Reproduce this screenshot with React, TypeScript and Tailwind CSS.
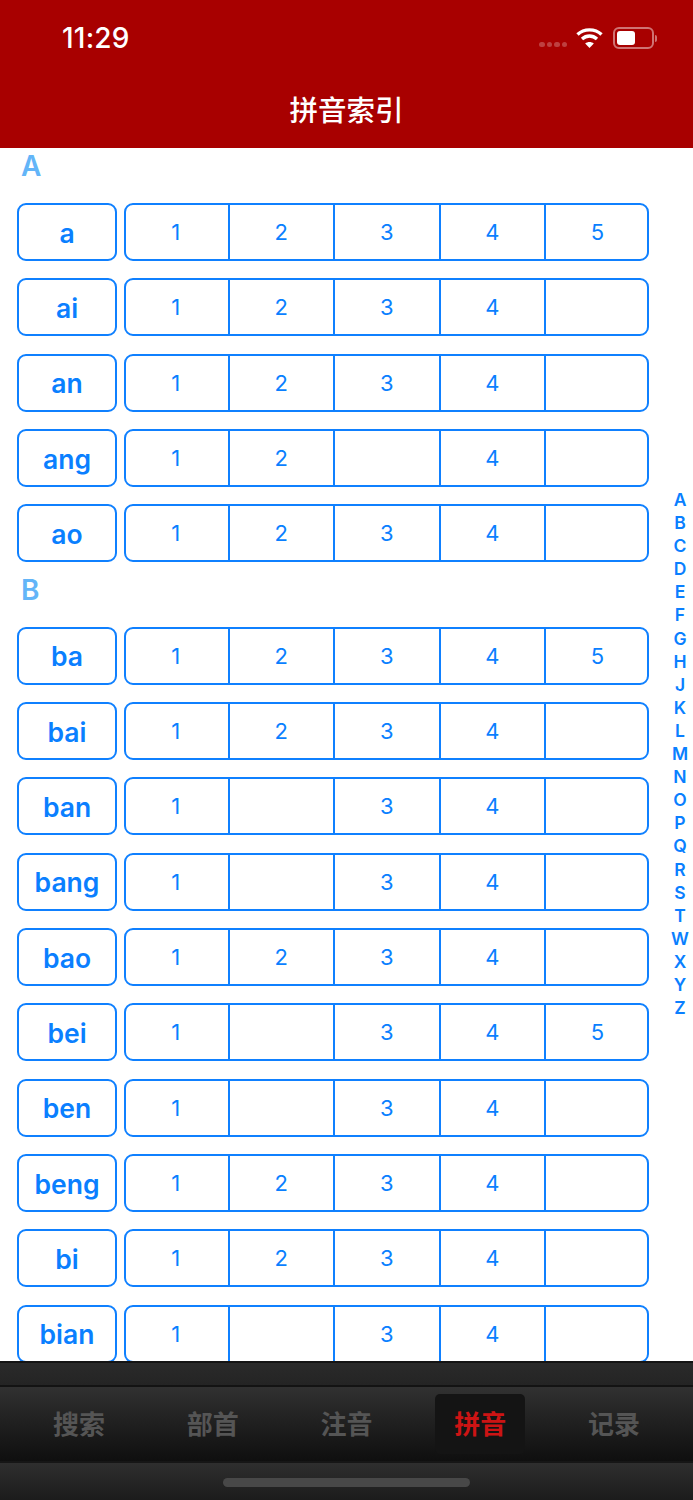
const sections: { letter: string; rows: [string, string][] }[] = [
  { letter: "A", rows: [["a", "12345"], ["ai", "1234"], ["an", "1234"], ["ang", "124"], ["ao", "1234"]] },
  {
    letter: "B",
    rows: [
      ["ba", "12345"], ["bai", "1234"], ["ban", "134"], ["bang", "134"], ["bao", "1234"],
      ["bei", "1345"], ["ben", "134"], ["beng", "1234"], ["bi", "1234"], ["bian", "134"],
    ],
  },
];
const index = "ABCDEFGHJKLMNOPQRSTWXYZ".split("");
const tabs = ["搜索", "部首", "注音", "拼音", "记录"];

function Row({ name, tones }: { name: string; tones: string }) {
  return (
    <div className="flex h-[58px] gap-[7px] mb-[17.33px] text-[#0a7fff]">
      <div className="w-[100px] shrink-0 rounded-[9px] border-2 border-[#0f80ff] flex items-center justify-center text-[26.5px] font-semibold leading-none pt-[2px]">
        {name}
      </div>
      <div className="w-[525px] shrink-0 rounded-[9px] border-2 border-[#0f80ff] grid grid-cols-[103.5px_105.5px_105.5px_105.5px_1fr] overflow-hidden">
        {["1", "2", "3", "4", "5"].map((n) => (
          <div
            key={n}
            className="flex items-center justify-center text-[22px] font-normal leading-none border-r-2 border-[#0f80ff] last:border-r-0 first:pr-[2px] last:pl-[2px]"
          >
            {tones.includes(n) ? n : ""}
          </div>
        ))}
      </div>
    </div>
  );
}

function App() {
  return (
    <div className="w-[693px] h-[1500px] flex flex-col overflow-hidden bg-white font-['Inter','Noto_Sans_CJK_SC',sans-serif]">
      <header className="h-[148px] shrink-0 bg-[#a80000] text-white relative flex flex-col">
        <div className="h-[76px] flex items-center justify-between pl-[62px] pr-[36px]">
          <span className="text-[28px] font-medium leading-none tracking-[0.2px]">11:29</span>
          <div className="flex items-center">
            <div className="flex gap-[2px] mt-[13px] mr-[9px]">
              <i className="w-[5.5px] h-[5.5px] rounded-full bg-white/25" />
              <i className="w-[5.5px] h-[5.5px] rounded-full bg-white/25" />
              <i className="w-[5.5px] h-[5.5px] rounded-full bg-white/25" />
              <i className="w-[5.5px] h-[5.5px] rounded-full bg-white/25" />
            </div>
            <svg width="27" height="22" viewBox="0 0 27 22" className="mr-[10px]" fill="none" stroke="#fff" strokeWidth="3.4">
              <path d="M1.5 7.5 C8 1.3 19 1.3 25.5 7.5" />
              <path d="M6 12 C10.5 8 16.5 8 21 12" />
              <path d="M13.5 21 L9.2 16.6 C11.6 14.6 15.4 14.6 17.8 16.6 Z" fill="#fff" stroke="none" />
            </svg>
            <div className="flex items-center">
              <div className="w-[41px] h-[22px] rounded-[6px] border-2 border-white/45 p-[2px]">
                <div className="w-[18px] h-full rounded-[3px] bg-white" />
              </div>
              <div className="w-[2px] h-[7px] ml-[1px] rounded-r-[2px] bg-white/45" />
            </div>
          </div>
        </div>
        <div className="flex-1 flex items-center justify-center text-[28.5px] font-medium leading-none pt-[1px] pb-[2px]">拼音索引</div>
      </header>

      <main className="flex-1 min-h-0 relative overflow-hidden pt-[8px] pl-[17px]">
        {sections.map((s) => (
          <section key={s.letter}>
            <h2 className="h-[47px] text-[28px] font-semibold leading-[21px] text-[#63b5f8] pl-[4px]">{s.letter}</h2>
            {s.rows.map(([n, t]) => (
              <Row key={n} name={n} tones={t} />
            ))}
          </section>
        ))}
        <div className="absolute left-[666px] w-[28px] top-[340px] flex flex-col items-center text-[#0a7fff] text-[17.5px] font-semibold leading-[23.09px]">
          {index.map((l) => (
            <span key={l}>{l}</span>
          ))}
        </div>
      </main>

      <footer className="h-[139px] shrink-0 flex flex-col font-['Noto_Sans_CJK_SC','Inter',sans-serif]">
        <div className="h-[26px] bg-gradient-to-b from-[#2a2a2a] to-[#242424] border-t-2 border-t-[#141414] border-b-2 border-b-[#131313]" />
        <nav className="h-[74px] flex px-[12px] items-center bg-gradient-to-b from-[#313131] to-[#0f0f0f]">
          {tabs.map((t, i) => (
            <div key={t} className="flex-1 flex items-center justify-center">
              <div
                className={
                  i === 3
                    ? "w-[90px] h-[60px] rounded-[5px] bg-[#141414] flex items-center justify-center text-[26px] font-bold leading-none text-[#cc1414] pb-[2px]"
                    : "w-[90px] h-[60px] flex items-center justify-center text-[26px] font-bold leading-none text-[#555555] pb-[2px]"
                }
              >
                {t}
              </div>
            </div>
          ))}
        </nav>
        <div className="flex-1 flex justify-center bg-gradient-to-b from-[#2e2e2e] to-[#1c1c1c] border-t-2 border-[#161616] pt-[15px]">
          <div className="w-[247px] h-[9px] rounded-full bg-[#484848]" />
        </div>
      </footer>
    </div>
  );
}

export default App;
